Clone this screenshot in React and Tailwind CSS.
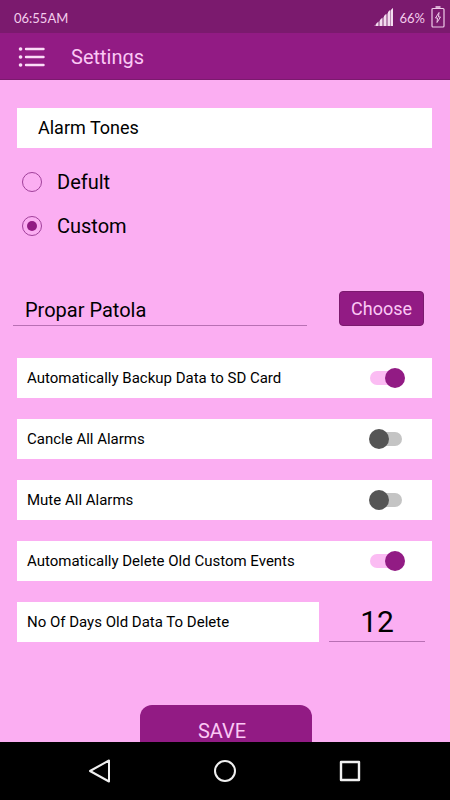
import React from 'react';

function StatusBar() {
    return (
        <div className="flex h-[33px] shrink-0 items-center justify-between bg-[#7b1a6e] pl-[14px] pr-[5px] pt-1 font-['Lato',sans-serif] text-[13px] text-[#f3cdec]">
            <span>06:55AM</span>
            <div className="flex items-center gap-[6px]">
                <svg className="mb-1 h-5 w-5" viewBox="0 0 20 20" aria-hidden="true">
                    <path d="M0 19L19 1V19Z" fill="#b985b1" />
                    <path d="M2 17v2h2v-4zM6 13v6h2v-8zM10 9v10h2V7zM14 5v14h2V3zM17 3v16h2V1z" fill="#f3dcef" />
                </svg>
                <span>66%</span>
                <svg className="mb-1 h-[22px] w-[14px]" viewBox="0 0 14 22" fill="none" stroke="#eecbe8" aria-hidden="true">
                    <rect x="1" y="2.5" width="12" height="18.5" rx="1" strokeWidth="1.2" />
                    <path d="M4.5 1h5" strokeWidth="1.6" />
                    <path d="M8 6.500L4.500 12H6.500L6 16.500L9.500 11H7.500z" />
                </svg>
            </div>
        </div>
    );
}

function Header() {
    return (
        <header className="flex h-[47px] shrink-0 items-center gap-[26px] border-b border-[#7b1a6e] bg-[#921b84] pl-[18px] pt-[2px]">
            <button type="button" aria-label="Menu">
                <svg className="h-5 w-[27px]" viewBox="0 0 27 20" fill="none" stroke="#fbdcf7" strokeWidth="2.4" strokeLinecap="round" aria-hidden="true">
                    <path d="M8 2h17.500M8 10h17.500M8 18h17.500" />
                    <path d="M2.500 2h.1M2.500 10h.1M2.500 18h.1" strokeWidth="3.6" />
                </svg>
            </button>
            <h1 className="text-xl text-[#fbc8f5]">Settings</h1>
        </header>
    );
}

function ToneOption({ label, defaultChecked }) {
    return (
        <label className="flex h-11 items-center gap-[15px] text-xl">
            <input
                type="radio"
                name="tone"
                defaultChecked={defaultChecked}
                className="grid size-5 appearance-none place-items-center rounded-full border border-[#a0409a] before:size-[10px] before:rounded-full checked:before:bg-[#921b84]"
            />
            {label}
        </label>
    );
}

function SettingSwitch({ label, defaultChecked }) {
    return (
        <label className="flex h-10 items-center justify-between bg-white pl-[10px] pr-[27px] text-[15px]">
            {label}
            <input
                type="checkbox"
                role="switch"
                defaultChecked={defaultChecked}
                className="relative h-5 w-9 appearance-none before:absolute before:left-px before:top-[3px] before:h-[14px] before:w-8 before:rounded-full before:bg-[#c4c4c4] after:absolute after:left-0 after:top-0 after:size-5 after:rounded-full after:bg-[#555555] checked:before:bg-[#fbbcf3] checked:after:left-4 checked:after:bg-[#921b84]"
            />
        </label>
    );
}

const switches = [
    { label: 'Automatically Backup Data to SD Card', on: true },
    { label: 'Cancle All Alarms', on: false },
    { label: 'Mute All Alarms', on: false },
    { label: 'Automatically Delete Old Custom Events', on: true },
];

function NavBar() {
    return (
        <nav className="flex h-[58px] shrink-0 items-center justify-between bg-black px-[87px]">
            <button type="button" aria-label="Back">
                <svg className="size-6" viewBox="0 0 24 24" fill="none" stroke="#f0f0f0" strokeWidth="2" strokeLinejoin="round" aria-hidden="true">
                    <path d="M22 1.500V22.500L3 12z" />
                </svg>
            </button>
            <button type="button" aria-label="Home">
                <svg className="size-6" viewBox="0 0 24 24" fill="none" stroke="#f0f0f0" strokeWidth="2" aria-hidden="true">
                    <circle cx="12" cy="12" r="10" />
                </svg>
            </button>
            <button type="button" aria-label="Recent apps">
                <svg className="size-6" viewBox="0 0 24 24" fill="none" stroke="#f0f0f0" strokeWidth="2.400" strokeLinejoin="round" aria-hidden="true">
                    <rect x="2" y="3" width="18" height="18" />
                </svg>
            </button>
        </nav>
    );
}

export default function App() {
    return (
        <div className="flex h-screen flex-col bg-[#fbaef2] font-['Roboto',sans-serif] text-black">
            <StatusBar />
            <Header />
            <main className="flex-1 overflow-y-auto pt-7 [scrollbar-width:none]">
                <div className="pl-[17px] pr-[18px]">
                    <h2 id="tones" className="flex h-10 items-center bg-white pl-[21px] text-lg">
                        Alarm Tones
                    </h2>
                    <div role="radiogroup" aria-labelledby="tones" className="pl-[5px] pt-3">
                        <ToneOption label="Defult" />
                        <ToneOption label="Custom" defaultChecked />
                    </div>
                </div>

                <div className="mt-[43px] flex h-[35px] gap-8 pl-[13px] pr-[26px]">
                    <input
                        type="text"
                        aria-label="Tone name"
                        defaultValue="Propar Patola"
                        className="min-w-0 flex-1 border-b border-[#b870b4] pl-3 pt-1 text-xl outline-none"
                    />
                    <button type="button" className="w-[85px] rounded-sm border border-[#7b1a6e] bg-[#921b84] text-lg text-[#fbc8f5]">
                        Choose
                    </button>
                </div>

                <div className="mt-8 flex flex-col gap-[21px] pl-[17px] pr-[18px]">
                    {switches.map((item) => (
                        <SettingSwitch key={item.label} label={item.label} defaultChecked={item.on} />
                    ))}
                    <div className="flex h-10 gap-[10px] pr-[7px]">
                        <label htmlFor="days" className="flex flex-1 items-center bg-white pl-[10px] text-[15px]">
                            No Of Days Old Data To Delete
                        </label>
                        <input
                            id="days"
                            type="text"
                            inputMode="numeric"
                            defaultValue="12"
                            className="w-24 border-b border-[#b870b4] text-center text-3xl outline-none"
                        />
                    </div>
                </div>

                <div className="mt-[63px] flex justify-center pl-[2px]">
                    <button type="button" className="h-[52px] w-[172px] rounded-xl bg-[#921b84] pr-2 text-xl text-[#fbc8f5]">
                        SAVE
                    </button>
                </div>
            </main>
            <NavBar />
        </div>
    );
}
